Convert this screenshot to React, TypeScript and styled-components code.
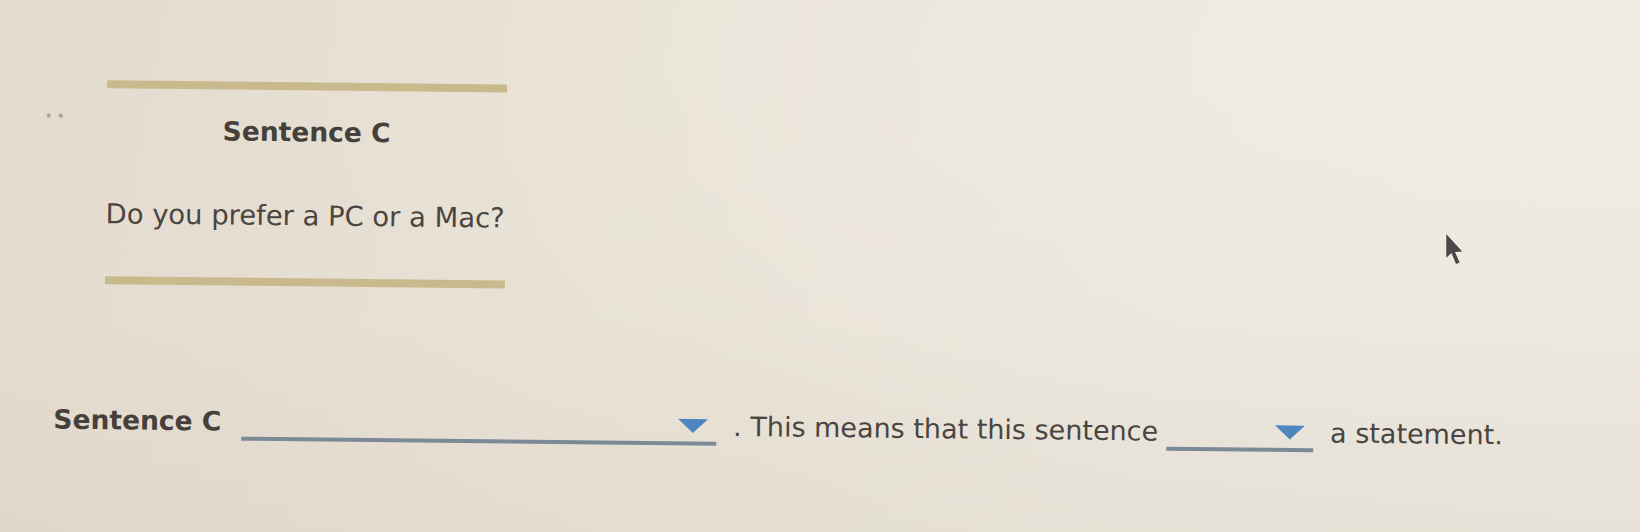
import React from "react";
import styled, { createGlobalStyle } from "styled-components";

const Global = createGlobalStyle`
  html, body {
    margin: 0;
    padding: 0;
  }
  body {
    width: 1640px;
    height: 532px;
    overflow: hidden;
    background: linear-gradient(100deg, #e3dbce 0%, #e8e1d5 35%, #ebe6dc 70%, #ece7de 100%);
    font-family: "DejaVu Sans", Verdana, sans-serif;
    color: #4a4540;
  }
`;

const Page = styled.div`
  position: relative;
  width: 1640px;
  height: 532px;
  overflow: hidden;
  background: radial-gradient(ellipse at 90% 10%, rgba(245, 241, 233, 0.5) 0%, rgba(245, 241, 233, 0) 60%),
    linear-gradient(180deg, rgba(0, 0, 0, 0) 60%, rgba(120, 100, 70, 0.04) 100%);
`;

const Content = styled.div`
  padding-top: 79px;
  transform: rotate(0.62deg);
  transform-origin: 0 0;
`;

const UpperRow = styled.div`
  display: flex;
  align-items: flex-start;
  padding-left: 48px;
`;

const Dots = styled.div`
  display: flex;
  gap: 8px;
  width: 16px;
  margin-top: 34px;
`;

const Dot = styled.span`
  width: 4px;
  height: 4px;
  border-radius: 50%;
  background: #a39b92;
  filter: blur(0.6px);
`;

const Block = styled.div`
  width: 400px;
  margin-left: 44px;
  display: flex;
  flex-direction: column;
`;

const Rule = styled.div<{ $top?: number }>`
  height: 8px;
  margin-top: ${(p) => p.$top ?? 0}px;
  background: #c9ba8e;
  border-radius: 1px;
`;

const Heading = styled.div`
  margin-top: 26px;
  text-align: center;
  font-size: 26.5px;
  line-height: 32px;
  font-weight: 700;
  color: #45403b;
`;

const Question = styled.div`
  margin-top: 52px;
  font-size: 27.4px;
  line-height: 32px;
  white-space: nowrap;
`;

const AnswerRow = styled.div`
  display: flex;
  align-items: flex-start;
  margin-top: 120px;
  padding-left: 58px;
  white-space: nowrap;
`;

const Label = styled.span`
  font-size: 26.5px;
  line-height: 32px;
  font-weight: 700;
  color: #45403b;
`;

const Text = styled.span<{ $gap: number }>`
  margin-left: ${(p) => p.$gap}px;
  font-size: 27px;
  line-height: 32px;
`;

const Select = styled.div<{ $width: number; $gap: number }>`
  box-sizing: content-box;
  width: ${(p) => p.$width - 8}px;
  height: 23px;
  margin-left: ${(p) => p.$gap}px;
  padding: 8px 8px 0 0;
  display: flex;
  justify-content: flex-end;
  align-items: flex-start;
  border-bottom: 4px solid #7c8996;
  cursor: pointer;
`;

const Caret = () => (
  <svg width="31" height="15" viewBox="0 0 31 15" aria-hidden="true">
    <path d="M0.5 0.5 H30.5 L15.5 14.5 Z" fill="#4e86bf" />
  </svg>
);

const Pointer = styled.svg`
  position: absolute;
  left: 1444px;
  top: 233px;
  filter: drop-shadow(0 0 1.5px rgba(255, 255, 255, 0.7)) blur(0.6px);
`;

export default function App() {
  return (
    <>
      <Global />
      <Page>
        <Content>
          <UpperRow>
            <Dots aria-hidden="true">
              <Dot />
              <Dot />
            </Dots>
            <Block>
              <Rule />
              <Heading>Sentence C</Heading>
              <Question>Do you prefer a PC or a Mac?</Question>
              <Rule $top={46} />
            </Block>
          </UpperRow>
          <AnswerRow>
            <Label>Sentence C</Label>
            <Select $width={475} $gap={20}>
              <Caret />
            </Select>
            <Text $gap={17}>. This means that this sentence</Text>
            <Select $width={147} $gap={8}>
              <Caret />
            </Select>
            <Text $gap={17}>a statement.</Text>
          </AnswerRow>
        </Content>
        <Pointer width="21" height="33" viewBox="0 0 20 32" aria-hidden="true">
          <path
            d="M2 1 L2 24 L7 19.5 L11.5 30 L15 28.5 L10.5 18.5 L17.5 18 Z"
            fill="#4a4846"
          />
        </Pointer>
      </Page>
    </>
  );
}
